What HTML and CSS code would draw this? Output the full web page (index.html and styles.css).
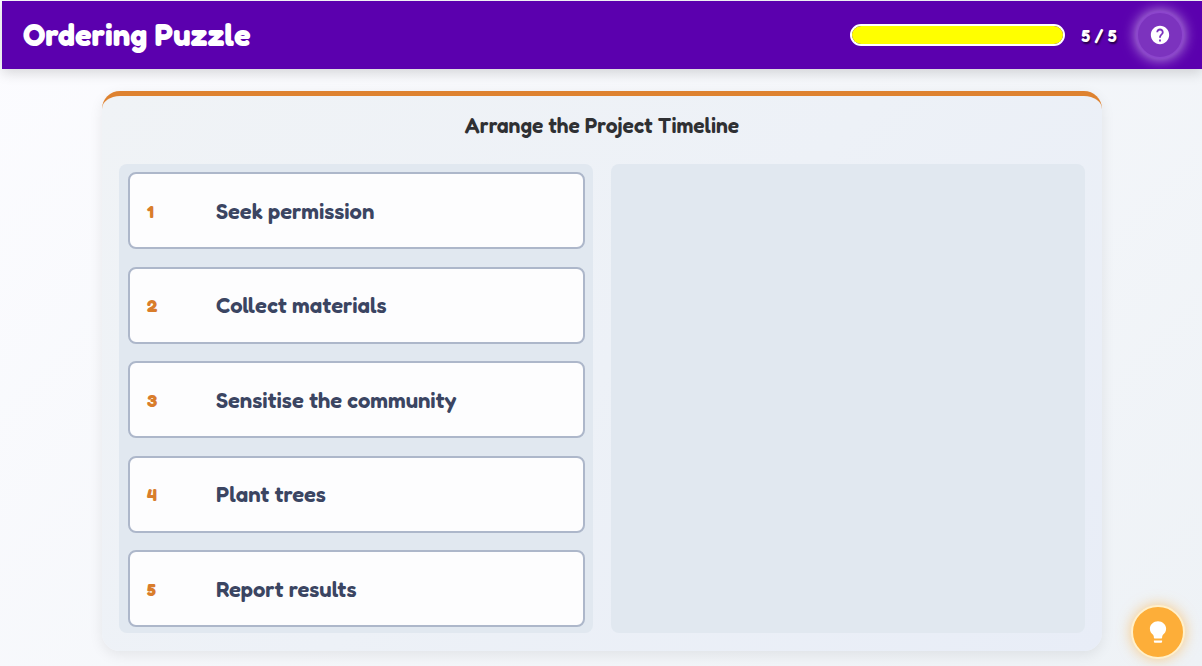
FILE: index.html
```html
<!DOCTYPE html>
<html lang="en">
<head>
<meta charset="utf-8">
<meta name="viewport" content="width=device-width, initial-scale=1">
<title>Ordering Puzzle</title>
<link rel="stylesheet" href="styles.css">
</head>
<body>
<header class="topbar">
  <h1 class="topbar-title">Ordering Puzzle</h1>
  <div class="status">
    <div class="progress" role="progressbar" aria-label="Steps placed" aria-valuemin="0" aria-valuemax="5" aria-valuenow="5">
      <div class="progress-fill" style="width: 100%"></div>
    </div>
    <span class="score">5 / 5</span>
    <button class="help" type="button" aria-label="Help">
      <svg class="help-icon" viewBox="0 0 24 24" aria-hidden="true"><path fill="currentColor" d="M12 2C6.480 2 2 6.480 2 12s4.480 10 10 10 10-4.480 10-10S17.520 2 12 2zm1 17h-2v-2h2v2zm2.070-7.750l-.9.920C13.450 12.900 13 13.500 13 15h-2v-.5c0-1.100.45-2.100 1.170-2.830l1.240-1.260c.37-.36.59-.86.59-1.410 0-1.100-.9-2-2-2s-2 .9-2 2H8c0-2.210 1.790-4 4-4s4 1.790 4 4c0 .88-.36 1.680-.93 2.250z"/></svg>
    </button>
  </div>
</header>
<main class="board">
  <h2 class="board-title">Arrange the Project Timeline</h2>
  <div class="columns">
    <ol class="pane">
      <li class="step"><span class="step-number">1</span><span class="step-text">Seek permission</span></li>
      <li class="step"><span class="step-number">2</span><span class="step-text">Collect materials</span></li>
      <li class="step"><span class="step-number">3</span><span class="step-text">Sensitise the community</span></li>
      <li class="step"><span class="step-number">4</span><span class="step-text">Plant trees</span></li>
      <li class="step"><span class="step-number">5</span><span class="step-text">Report results</span></li>
    </ol>
    <div class="pane"></div>
  </div>
</main>
<button class="hint" type="button" aria-label="Hint">
  <svg class="hint-icon" viewBox="0 0 24 24" aria-hidden="true"><path fill="currentColor" d="M12 2C8 2 4.500 5 4.500 9c0 2.400 1.200 4.100 2.900 5.500.6.600.8 1.500.8 2.500 0 .55.45 1 1 1h5.600c.55 0 1-.45 1-1 0-1 .2-1.900.8-2.500 1.700-1.400 2.900-3.100 2.900-5.500 0-4-3.500-7-7.500-7zM8.200 19.800v1c0 .7.500 1.200 1.200 1.200h5.200c.7 0 1.200-.5 1.200-1.200v-1z"/></svg>
</button>
</body>
</html>
```
FILE: styles.css
```css
* {
  box-sizing: border-box;
}

body {
  display: flex;
  flex-direction: column;
  min-height: 100vh;
  margin: 0;
  padding: 1px 0 15px 2px;
  background: linear-gradient(135deg, #fcfcff, #eef2f6);
  font-family: Fredoka, Lato, "Noto Sans", sans-serif;
}

.topbar {
  display: flex;
  align-items: center;
  justify-content: space-between;
  height: 68px;
  padding: 0 18px 0 21px;
  background: #5b00ae;
  color: #fff;
  box-shadow: 0 4px 12px rgba(0, 0, 0, 0.15);
}

.topbar-title {
  margin: 0;
  font-size: 31px;
  font-weight: 900;
  line-height: 40px;
}

.status {
  display: flex;
  align-items: center;
}

.progress {
  width: 215px;
  height: 22px;
  border: 2px solid #fff;
  border-radius: 11px;
  overflow: hidden;
}

.progress-fill {
  height: 100%;
  background: #ff0;
}

.score {
  width: 36px;
  margin: 0 19px 0 16px;
  font-size: 18px;
  font-weight: 600;
  line-height: 24px;
  text-align: center;
  white-space: nowrap;
  text-shadow: 1px 2px 2px rgba(0, 0, 0, 0.6);
}

.help {
  display: grid;
  place-items: center;
  width: 48px;
  height: 48px;
  padding: 0;
  border: 2px solid #8c45cc;
  border-radius: 50%;
  background: #7c33be;
  color: #fff;
  box-shadow: 0 0 14px rgba(255, 255, 255, 0.65);
}

.help-icon {
  width: 22px;
  height: 22px;
}

.board {
  display: flex;
  flex: 1;
  flex-direction: column;
  width: calc(100% - 32px);
  max-width: 1000px;
  margin: 22px auto 0;
  padding: 15px 17px 18px;
  border-top: 5px solid #de8230;
  border-radius: 18px;
  background: linear-gradient(135deg, #f0f3f6, #edf1f7 50%, #e8edf7);
  box-shadow: 0 4px 14px rgba(0, 0, 0, 0.08);
}

.board-title {
  margin: 0 0 23px;
  color: #2f3033;
  font-size: 21px;
  font-weight: 600;
  line-height: 30px;
  text-align: center;
}

.columns {
  display: grid;
  flex: 1;
  grid-template-columns: 1fr 1fr;
  gap: 18px;
}

.pane {
  display: flex;
  flex-direction: column;
  justify-content: space-between;
  gap: 12px;
  margin: 0;
  padding: 8px 8px 6px 9px;
  border-radius: 8px;
  background: #e1e8f0;
  list-style: none;
}

.step {
  display: flex;
  align-items: center;
  min-height: 77px;
  padding: 8px 17px;
  border: 2px solid #adb7ca;
  border-radius: 8px;
  background: #fdfdfe;
}

.step-number {
  flex: none;
  width: 69px;
  color: #d97d2b;
  font-size: 18px;
  font-weight: 700;
}

.step-text {
  color: #3b4562;
  font-size: 22px;
  font-weight: 600;
  line-height: 28px;
}

.hint {
  position: fixed;
  right: 17px;
  bottom: 7px;
  display: grid;
  place-items: center;
  width: 54px;
  height: 54px;
  padding: 0;
  border: 2px solid #fff0cb;
  border-radius: 50%;
  background: #fdae39;
  color: #fff;
  box-shadow: 0 0 14px rgba(253, 174, 57, 0.6);
}

.hint-icon {
  width: 26px;
  height: 26px;
}

@media (max-width: 640px) {
  .progress {
    width: 80px;
  }

  .columns {
    grid-template-columns: 1fr;
  }
}
```
